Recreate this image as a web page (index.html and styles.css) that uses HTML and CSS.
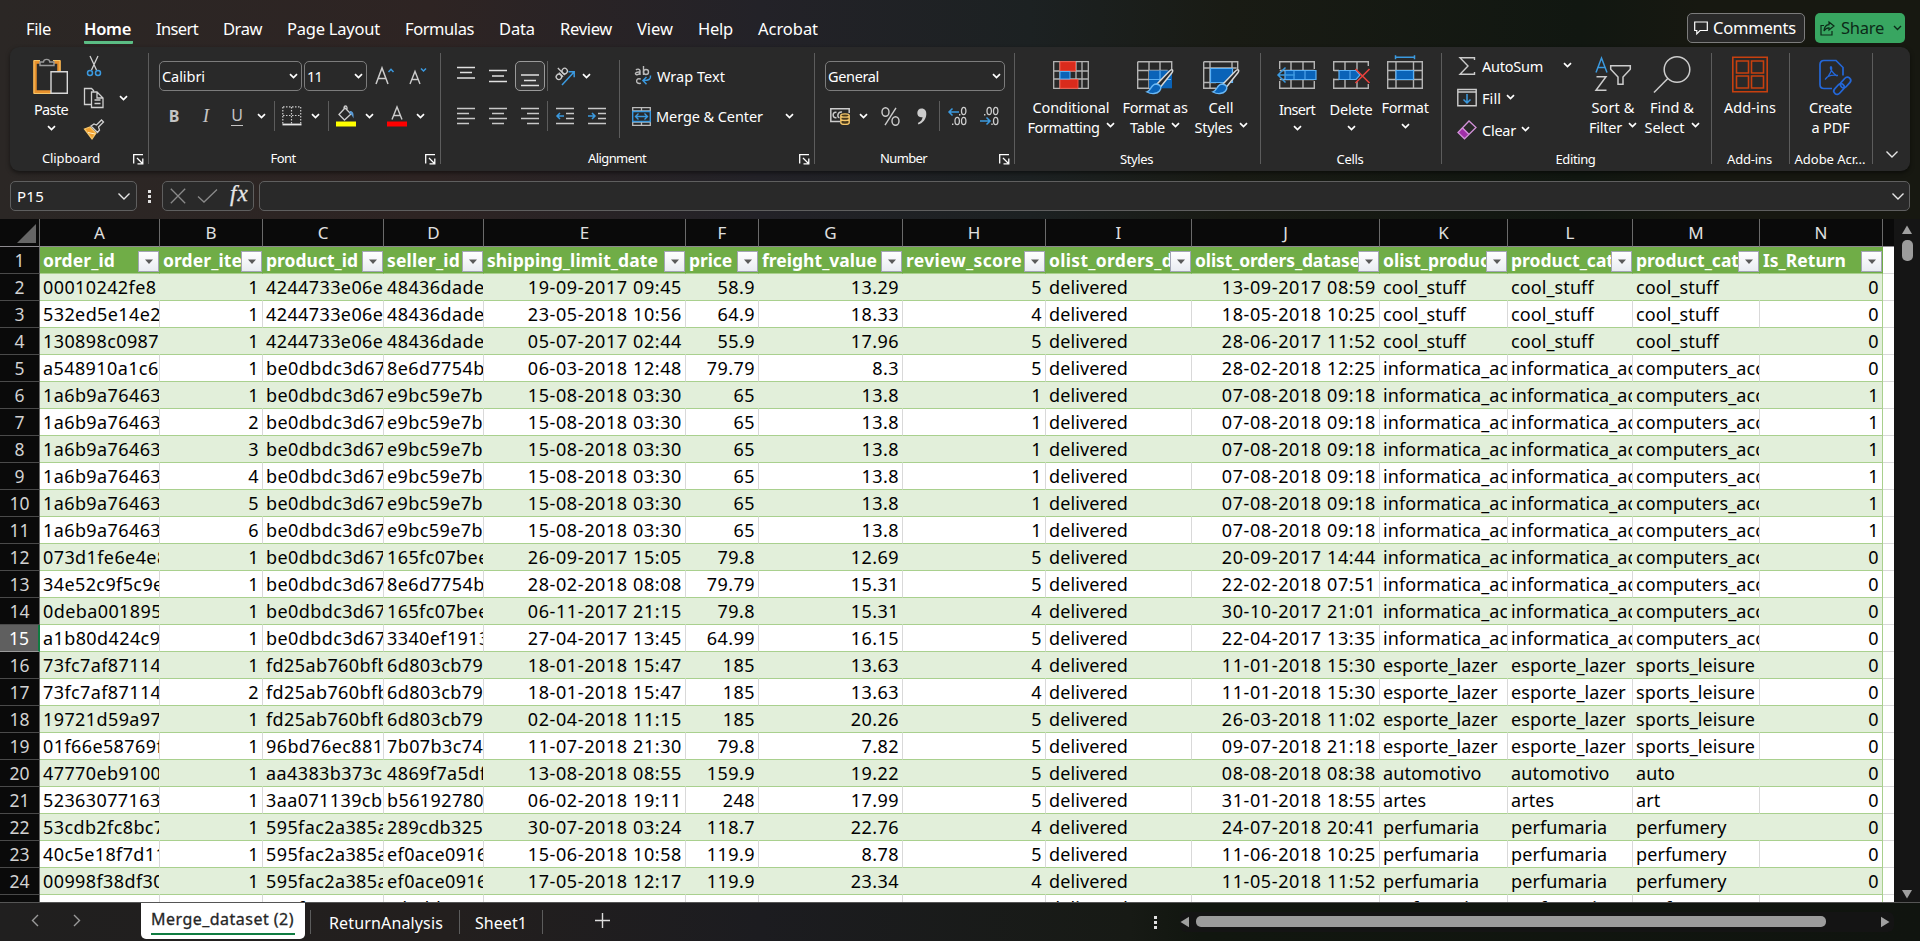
FILE: index.html
```html
<!DOCTYPE html>
<html lang="en">
<head>
<meta charset="utf-8">
<title>Merge_dataset - Workbook</title>
<link rel="stylesheet" href="styles.css">
</head>
<body>
<svg width="0" height="0" class="defs">
  <symbol id="chev" viewBox="0 0 9 6"><path d="M1 1.2 4.5 4.6 8 1.2" fill="none" stroke="#fff" stroke-width="1.7"/></symbol>
  <symbol id="wide" viewBox="0 0 14 9"><path d="M1.5 1.5 7 7 12.5 1.5" fill="none" stroke="#e6e6e6" stroke-width="1.4"/></symbol>
  <symbol id="launch" viewBox="0 0 11 11"><path d="M.7 9.500V.7H10M4 4l5 5M9.800 4.500v5.300H4.500" fill="none" stroke="#fff" stroke-width="1.3"/></symbol>
</svg>
<div class="app">
<header class="tabs">
  <nav class="tablist">
    <span class="tab file" data-w="25">File</span><span class="tab active" data-w="47">Home</span><span class="tab" data-w="42">Insert</span><span class="tab" data-w="39">Draw</span><span class="tab" data-w="93">Page Layout</span><span class="tab" data-w="69">Formulas</span><span class="tab" data-w="36">Data</span><span class="tab" data-w="52">Review</span><span class="tab" data-w="36">View</span><span class="tab" data-w="35">Help</span><span class="tab" data-w="60">Acrobat</span>
  </nav>
  <div class="actions">
    <div class="comments"><svg width="14" height="14" viewBox="0 0 14 14"><path d="M.7 1h12.600v8.500H6L2.800 12.800V9.500H.7Z" fill="none" stroke="#fff" stroke-width="1.2"/></svg><span data-w="83">Comments</span></div>
    <div class="share"><svg width="15" height="15" viewBox="0 0 15 15"><path d="M4 4.500H1V14h11V10M9 1l5 4-5 4V6.800C6.500 6.800 5 8 4 10c.2-3.800 2-6 5-6.300Z" fill="none" stroke="#0c2a18" stroke-width="1.2"/></svg><span data-w="43">Share</span><svg class="sc" width="9" height="6" viewBox="0 0 9 6"><path d="M1 1 4.500 4.500 8 1" fill="none" stroke="#0c2a18" stroke-width="1.4"/></svg></div>
  </div>
</header>

<section class="ribbon">
  <div class="group g-clip">
    <div class="body">
      <div class="big paste">
        <svg width="36" height="40" viewBox="0 0 36 40"><path d="M7 6H2v30h17M21 6h5v10" fill="none" stroke="#e8912d" stroke-width="3.500"/><path d="M7 4.500H1v33h18M20 4.500h7V15" fill="none" stroke="#f5c76b" stroke-width="1"/><path d="M7 9.500V6h3.500c.3-3.500 6-3.500 6.300 0H21v3.500Z" fill="#292929" stroke="#9a9a9a" stroke-width="1.400"/><path d="M18 15.700h16.300v21.600H18Z" fill="#292929" stroke="#d8d8d8" stroke-width="1.400"/></svg>
        <span data-w="34">Paste</span><svg class="c"><use href="#chev"/></svg>
      </div>
      <div class="mini">
        <svg width="22" height="22" viewBox="0 0 22 22"><path d="M7 1l6.500 14M15 1 8.500 15" stroke="#d0d0d0" stroke-width="1.300"/><g fill="none" stroke="#3b9ae0" stroke-width="1.500"><circle cx="7" cy="18" r="2.500"/><circle cx="15" cy="18" r="2.500"/></g></svg>
        <svg width="22" height="22" viewBox="0 0 22 22"><path d="M8 17.500H1.500v-16H8.500L11 4M8.500 5H14l6 6v9.500H8.500ZM14 5v6h6M11.500 13h6M11.500 16.500h6" fill="none" stroke="#d0d0d0" stroke-width="1.300"/></svg>
        <svg width="22" height="22" viewBox="0 0 22 22"><path d="M1.500 10 7 8l6 6-4 6Z" fill="#f0a030" stroke="#f5c76b" stroke-width="1.300"/><path d="M5 13.500 12 15" stroke="#fff2c8"/><path d="M8 7l3-2 2.500 1 5-5 2 2-5 5 1 3-2 2.500Z" fill="#292929" stroke="#d0d0d0" stroke-width="1.300"/></svg>
      </div>
      <svg class="c copyc"><use href="#chev"/></svg>
    </div>
    <div class="glabel"><span data-w="58">Clipboard</span><svg class="l"><use href="#launch"/></svg></div>
  </div>

  <div class="group g-font">
    <div class="body col">
      <div class="row f1">
        <div class="combo"><span data-w="43">Calibri</span><svg class="c"><use href="#chev"/></svg></div>
        <div class="combo size"><span data-w="15">11</span><svg class="c"><use href="#chev"/></svg></div>
        <svg width="20" height="20" viewBox="0 0 20 20"><path d="M1 18 7 2l6 16M3.300 12.500h7.500" fill="none" stroke="#ccc" stroke-width="1.500"/><path d="M13.500 6 16 3.300 18.500 6" fill="none" stroke="#3b9ae0" stroke-width="1.500"/></svg>
        <svg width="20" height="20" viewBox="0 0 20 20"><path d="M2 18 7 5.500 12 18M4 13.500h6" fill="none" stroke="#ccc" stroke-width="1.400"/><path d="M13 2.500 15.500 5 18 2.500" fill="none" stroke="#3b9ae0" stroke-width="1.500"/></svg>
      </div>
      <div class="row f2">
        <span class="gb">B</span><span class="gi">I</span><span class="gu">U</span><svg class="c"><use href="#chev"/></svg><i class="sep"></i>
        <svg width="20" height="20" viewBox="0 0 20 20"><path d="M1 .8h18M1 9.500h18M.8 1v17M9.500 1v17M18.700 1v17" fill="none" stroke="#ccc" stroke-width="1.200" stroke-dasharray="1.500 1.500"/><path d="M.5 18.500h19" stroke="#e8e8e8" stroke-width="1.800"/></svg>
        <svg class="c"><use href="#chev"/></svg><i class="sep"></i>
        <svg width="20" height="22" viewBox="0 0 20 22"><path d="M3 9.500 9 3l6 6-6.500 6ZM8 5V2.500c.3-2 2.700-2 3 0V6" fill="none" stroke="#ccc" stroke-width="1.300"/><path d="M14 6c3 0 4 2 3.500 7.500-1-2-1.500-4-4-5Z" fill="#5b9bd5"/><path d="M0 16.500h20v5H0Z" fill="#ff0"/></svg>
        <svg class="c"><use href="#chev"/></svg>
        <svg width="20" height="22" viewBox="0 0 20 22"><path d="M5 14.500 10 2l5 12.500M6.800 10.500h6.500" fill="none" stroke="#ccc" stroke-width="1.400"/><path d="M0 16.500h20v5H0Z" fill="red"/></svg>
        <svg class="c"><use href="#chev"/></svg>
      </div>
    </div>
    <div class="glabel"><span data-w="25">Font</span><svg class="l"><use href="#launch"/></svg></div>
  </div>

  <div class="group g-align">
    <div class="body">
      <div class="col">
        <div class="row a1">
          <svg width="18" height="20"><path d="M0 1.500h18M3 6.500h12M0 12h18" stroke="#e0e0e0" stroke-width="1.400"/></svg>
          <svg width="18" height="20"><path d="M0 4.500h18M3 10h12M0 15.500h18" stroke="#e0e0e0" stroke-width="1.400"/></svg>
          <div class="pressed"><svg width="18" height="20"><path d="M0 9h18M3 14.500h12M0 19.500h18" stroke="#e0e0e0" stroke-width="1.400"/></svg></div>
          <i class="sep"></i>
          <svg width="20" height="20" viewBox="0 0 20 20"><g fill="none" stroke="#ccc" stroke-width="1.300" transform="rotate(-45 6 8)"><circle cx="2.500" cy="8.500" r="2.700"/><path d="M5.500 5.500v6M8 1.500v10"/><circle cx="10.700" cy="8.500" r="2.700"/></g><path d="M7 19 19 6M13.500 5.700h5.700v5.500" fill="none" stroke="#3b9ae0" stroke-width="1.500"/></svg>
          <svg class="c"><use href="#chev"/></svg>
        </div>
        <div class="row a2">
          <svg width="18" height="18"><path d="M0 1.500h18M0 6.500h12M0 11.500h18M0 16.500h12" stroke="#c8c8c8" stroke-width="1.600"/></svg>
          <svg width="18" height="18"><path d="M0 1.500h18M3 6.500h12M0 11.500h18M3 16.500h12" stroke="#c8c8c8" stroke-width="1.600"/></svg>
          <svg width="18" height="18"><path d="M0 1.500h18M6 6.500h12M0 11.500h18M6 16.500h12" stroke="#c8c8c8" stroke-width="1.600"/></svg>
          <i class="sep"></i>
          <svg width="18" height="18"><path d="M0 1.500h18M10 6.500h8M10 11.500h8M0 16.500h18" stroke="#c8c8c8" stroke-width="1.600"/><path d="M8 9H1M4 6 1 9l3 3" fill="none" stroke="#3b9ae0" stroke-width="1.500"/></svg>
          <svg width="18" height="18"><path d="M0 1.500h18M10 6.500h8M10 11.500h8M0 16.500h18" stroke="#c8c8c8" stroke-width="1.600"/><path d="M0 9h7M4 6l3 3-3 3" fill="none" stroke="#3b9ae0" stroke-width="1.500"/></svg>
        </div>
      </div>
      <i class="sep tall"></i>
      <div class="col wrapcol">
        <div class="line"><svg width="20" height="20" viewBox="0 0 20 20"><g fill="none" stroke="#bbb" stroke-width="1.400"><path d="M4 4c1-1.200 4-1.200 4 .8V9M8 6C2 5.500 3 9 5 8.700 7 8.500 8 7.500 8 6M11.500 0v9M8.800 13.200C4 10.800 2.500 18.500 8.800 17.300"/><circle cx="14" cy="6" r="2.500"/></g><path d="M18.500 9.500c.5 4-2 5-7 5M14.500 11l-3.500 3.500 3.500 3.800" fill="none" stroke="#3b9ae0" stroke-width="1.500"/></svg><span data-w="68">Wrap Text</span></div>
        <div class="line"><svg width="19" height="19" viewBox="0 0 19 19"><path d="M.7.700h17.600v17.600H.700ZM9.500 1v4M9.500 14v4M.7 4h18M.700 15h18" fill="none" stroke="#bdbdbd" stroke-width="1.300"/><path d="M.7 4.500h17.600v10H.700Z" fill="#292929" stroke="#3b9ae0" stroke-width="1.400"/><path d="M3.500 9.500h12M6.500 6.500l-3 3 3 3M12.500 6.500l3 3-3 3" fill="none" stroke="#3b9ae0" stroke-width="1.400"/></svg><span data-w="107">Merge &amp; Center</span><svg class="c mc"><use href="#chev"/></svg></div>
      </div>
    </div>
    <div class="glabel"><span data-w="58">Alignment</span><svg class="l"><use href="#launch"/></svg></div>
  </div>

  <div class="group g-num">
    <div class="body col">
      <div class="row n1"><div class="combo"><span data-w="51">General</span><svg class="c"><use href="#chev"/></svg></div></div>
      <div class="row n2">
        <svg width="20" height="18" viewBox="0 0 20 18"><path d="M10 14.500H.8V1.800h18.400V6" fill="none" stroke="#ccc" stroke-width="1.500"/><path d="M6.500 5.500C2 4 2 12 6.500 10.500M12 5C7 4 7 11.500 9.500 10.500" fill="none" stroke="#ccc" stroke-width="1.500"/><path d="M10.800 8.500v7c0 2.500 8.400 2.500 8.400 0v-7c0-2.200-8.400-2.200-8.400 0c0 2.200 8.400 2.200 8.400 0M10.800 12c0 2 8.400 2 8.400 0" fill="#4a3a1c" stroke="#f5c76b" stroke-width="1.400"/></svg>
        <svg class="c"><use href="#chev"/></svg>
        <svg width="19" height="19" viewBox="0 0 19 19"><g fill="none" stroke="#ccc" stroke-width="1.400"><ellipse cx="4.500" cy="5" rx="3.500" ry="4.300"/><ellipse cx="14.500" cy="14" rx="3.500" ry="4.300"/><path d="M15 .8 4 18.200"/></g></svg>
        <svg width="10" height="17" viewBox="0 0 10 17"><path d="M4.500.5c3.500 0 5 2.500 4.800 6C9 11 6 15 1.500 16.500L.8 15C4 13.500 5.500 11.500 5.500 9 2 10 .3 7.500.3 5 .3 2.500 2 .5 4.500.500Z" fill="#ccc"/></svg>
        <i class="sep"></i>
        <svg width="19" height="20" viewBox="0 0 19 20"><path d="M11 6H1M4.500 2.500 1 6l3.500 3.500" fill="none" stroke="#3b9ae0" stroke-width="1.500"/><g fill="none" stroke="#ccc" stroke-width="1.300"><ellipse cx="15.700" cy="5" rx="2.200" ry="3.700"/><ellipse cx="9.200" cy="15" rx="2.200" ry="3.700"/><ellipse cx="15.700" cy="15" rx="2.200" ry="3.700"/></g><path d="M11 8h1.400v1.400H11ZM4 17.500h1.400v1.400H4Z" fill="#ccc"/></svg>
        <svg width="19" height="20" viewBox="0 0 19 20"><path d="M0 15h10M6.500 11.500 10 15l-3.500 3.500" fill="none" stroke="#3b9ae0" stroke-width="1.500"/><g fill="none" stroke="#ccc" stroke-width="1.300"><ellipse cx="9.200" cy="5" rx="2.200" ry="3.700"/><ellipse cx="15.700" cy="5" rx="2.200" ry="3.700"/><ellipse cx="15.700" cy="15" rx="2.200" ry="3.700"/></g><path d="M4 8h1.400v1.400H4ZM11.300 17.500h1.400v1.400h-1.400Z" fill="#ccc"/></svg>
      </div>
    </div>
    <div class="glabel"><span data-w="47">Number</span><svg class="l"><use href="#launch"/></svg></div>
  </div>

  <div class="group g-styles">
    <div class="body">
      <div class="big two">
        <svg width="38" height="40" viewBox="0 0 38 40"><path d="M1.700 4.700h34.600v26.600H1.700ZM1.700 14h34.600M1.700 22h34.600M8 4.700v26.600M30 4.700v26.600M24 4.700v26.600" fill="none" stroke="#b4b4b4" stroke-width="1.300"/><path d="M8 4.700h15.500V14H8ZM8 22.500h18v8.800H8Z" fill="#d92b1c" stroke="#f05545"/><path d="M8 14.500h10v7.500H8Z" fill="#0a63b8" stroke="#5ab0f5"/></svg>
        <span data-w="77">Conditional</span><div class="l2"><span data-w="72">Formatting</span><svg class="c"><use href="#chev"/></svg></div>
      </div>
      <div class="big two">
        <svg width="38" height="40" viewBox="0 0 38 40"><path d="M1.700 4.700h34V12M1.700 4.700v26.600H14M1.700 13.500h30M1.700 22.500h16M13 4.700v26.600M24 4.700v9" fill="none" stroke="#b4b4b4" stroke-width="1.400"/><path d="M13 13.500h23v17.800H13Z" fill="#0a63b8"/><path d="M13 22.500h22M24 13.500v17" stroke="#5ab0f5" stroke-width="1.200"/><path d="M21 27 33 14.500c3-3 5-1.500 2.700 1.500L24.500 30Z" fill="#292929" stroke="#d8d8d8" stroke-width="1.500"/><path d="M11 35c4-1 4-8 9-8 5 .5 6 4 3.500 7s-8 3.500-12.500 1Z" fill="#0a63b8" stroke="#6ab8f5" stroke-width="1.400"/></svg>
        <span data-w="65">Format as</span><div class="l2"><span data-w="35">Table</span><svg class="c"><use href="#chev"/></svg></div>
      </div>
      <div class="big two">
        <svg width="38" height="40" viewBox="0 0 38 40"><path d="M1.700 4.700h34V12M1.700 4.700v26.600H14M1.700 11h33M8 4.700v26.600M30 4.700v9M1.700 25.500H14" fill="none" stroke="#b4b4b4" stroke-width="1.400"/><path d="M8.500 11.500h22v14h-22Z" fill="#0a63b8" stroke="#5ab0f5" stroke-width="1.200"/><path d="M21 27 33 14.500c3-3 5-1.500 2.700 1.500L24.500 30Z" fill="#292929" stroke="#d8d8d8" stroke-width="1.500"/><path d="M11 35c4-1 4-8 9-8 5 .5 6 4 3.500 7s-8 3.500-12.500 1Z" fill="#0a63b8" stroke="#6ab8f5" stroke-width="1.400"/></svg>
        <span data-w="25">Cell</span><div class="l2"><span data-w="38">Styles</span><svg class="c"><use href="#chev"/></svg></div>
      </div>
    </div>
    <div class="glabel low"><span data-w="33">Styles</span></div>
  </div>

  <div class="group g-cells">
    <div class="body">
      <div class="big one">
        <svg width="40" height="40" viewBox="0 0 40 40"><path d="M2.700 12V4.700h34.600V12M2.700 24v7.300h34.600V24M2.700 13.500h34.600M2.700 22.500h34.600M14 4.700v26.600M26 4.700v26.600" fill="none" stroke="#b4b4b4" stroke-width="1.400"/><path d="M8 13.500h31v9H8Z" fill="#0a63b8" stroke="#5ab0f5" stroke-width="1.200"/><path d="M17 13.500v9M28 13.500v9" stroke="#5ab0f5"/><path d="M18 18H1M8.500 10.500 1 18l7.500 7.500" fill="none" stroke="#3b9ae0" stroke-width="1.500"/></svg>
        <span data-w="36">Insert</span><svg class="c"><use href="#chev"/></svg>
      </div>
      <div class="big one">
        <svg width="40" height="40" viewBox="0 0 40 40"><path d="M2.700 14V4.700h34.600V9M2.700 21.500v9.800h34.600V27M2.700 13.500H8M2.700 22.500H8M14 4.700v9M26 4.700v8M14 22.500v9M26 24v7" fill="none" stroke="#b4b4b4" stroke-width="1.400"/><path d="M8 13.500h17l4 4.500-4 4.500H8Z" fill="#0a63b8" stroke="#5ab0f5" stroke-width="1.200"/><path d="M19 13.500v9" stroke="#5ab0f5"/><path d="m24.500 12 14 14M38.500 12l-14 14" stroke="#e8413c" stroke-width="1.600"/></svg>
        <span data-w="43">Delete</span><svg class="c"><use href="#chev"/></svg>
      </div>
      <div class="big one fmt">
        <svg width="40" height="40" viewBox="0 0 40 40"><path d="M2.700 4.700h34.600v26.600H2.700ZM2.700 13.500h34.600M2.700 22.500h34.600M11 4.700v26.600M28.500 4.700v26.600" fill="none" stroke="#b4b4b4" stroke-width="1.400"/><path d="M11 13.500h17.500v9H11Z" fill="#0a63b8" stroke="#5ab0f5" stroke-width="1.200"/><path d="M10.500.300h19M10.500-1.700v4M29.500-1.700v4" stroke="#3b9ae0" stroke-width="1.500"/></svg>
        <span data-w="47">Format</span><svg class="c"><use href="#chev"/></svg>
      </div>
    </div>
    <div class="glabel low"><span data-w="27">Cells</span></div>
  </div>

  <div class="group g-edit">
    <div class="body">
      <div class="editlist">
        <div class="line"><svg width="20" height="20" viewBox="0 0 20 20"><path d="M17.500 4V1.700H3L11 10l-8 8.300h14.500V16" fill="none" stroke="#ccc" stroke-width="1.400"/></svg><span data-w="61">AutoSum</span><svg class="c asc"><use href="#chev"/></svg></div>
        <div class="line"><svg width="20" height="20" viewBox="0 0 20 20"><path d="M.8 1.500h18.400v16.300H.8ZM.8 4h18.400" fill="none" stroke="#ccc" stroke-width="1.400"/><path d="M10 6v9M6.500 11.500 10 15l3.500-3.500" fill="none" stroke="#3b9ae0" stroke-width="1.500"/></svg><span data-w="19">Fill</span><svg class="c"><use href="#chev"/></svg></div>
        <div class="line"><svg width="20" height="20" viewBox="0 0 20 20"><path d="m1 12.500 5-5 6 6-5 5Z" fill="#a02fa8"/><path d="m1 12.500 11-11.500 7 6.500L7.500 18.800ZM5.500 8l6.500 6.500" fill="none" stroke="#d291d8" stroke-width="1.300"/></svg><span data-w="34">Clear</span><svg class="c"><use href="#chev"/></svg></div>
      </div>
      <div class="big two">
        <svg width="38" height="40" viewBox="0 0 38 40"><path d="M2 16.500 7.500 2 13 16.500M3.800 11.500h7.500" fill="none" stroke="#3b9ae0" stroke-width="1.500"/><path d="M2.500 20.700h9.500L2 34.300h10.500M16.700 9.700h19.600v3.500L29 21v7.300h-5V21l-7.300-7.800Z" fill="none" stroke="#ccc" stroke-width="1.500"/></svg>
        <span data-w="43">Sort &amp;</span><div class="l2"><span data-w="33">Filter</span><svg class="c"><use href="#chev"/></svg></div>
      </div>
      <div class="big two">
        <svg width="38" height="40" viewBox="0 0 38 40"><circle cx="24" cy="13.500" r="12.800" fill="none" stroke="#ccc" stroke-width="1.500"/><path d="M14.800 22.500 1 36.500" stroke="#ccc" stroke-width="1.500"/></svg>
        <span data-w="44">Find &amp;</span><div class="l2"><span data-w="40">Select</span><svg class="c"><use href="#chev"/></svg></div>
      </div>
    </div>
    <div class="glabel low"><span data-w="40">Editing</span></div>
  </div>

  <div class="group g-add">
    <div class="body"><div class="big two">
      <svg width="38" height="40" viewBox="0 0 38 40"><path d="M1.800 1.300h34.400v34.400H1.800Z" fill="none" stroke="#c8400f" stroke-width="1.600"/><path d="M5.500 5h12v12h-12ZM20.500 5h12v12h-12ZM5.500 20h12v12h-12ZM20.500 20h12v12h-12Z" fill="none" stroke="#c8400f" stroke-width="1.600"/></svg>
      <span data-w="52">Add-ins</span></div></div>
    <div class="glabel low"><span data-w="45">Add-ins</span></div>
  </div>
  <div class="group g-pdf">
    <div class="body"><div class="big two">
      <svg width="38" height="40" viewBox="0 0 38 40"><g fill="none" stroke="#2467d8" stroke-width="1.700"><path d="M20 32.500H12c-2.500 0-4-1.500-4-4V8.500c0-2.500 1.500-4 4-4h12l7 7v8"/><path d="M19 10.500c-2 1 1 6 6 9.500M19 10.500c2 2-1 9-6 13M13 23.500c2-3 7-5 13-4" stroke-width="1.300"/><rect x="-3.300" y="-6" width="6.600" height="12" rx="3.200" transform="translate(33.500 26.500) rotate(42)"/><rect x="-3.300" y="-6" width="6.600" height="12" rx="3.200" transform="translate(27 33) rotate(42)"/></g></svg>
      <span data-w="43">Create</span><div class="l2"><span data-w="38">a PDF</span></div></div></div>
    <div class="glabel low"><span data-w="71">Adobe Acr...</span></div>
  </div>
  <div class="collapse"><svg width="14" height="9"><use href="#wide"/></svg></div>
</section>

<section class="fbar">
  <div class="namebox"><span data-w="27">P15</span><svg width="14" height="9"><use href="#wide"/></svg></div>
  <div class="dots"><i></i><i></i><i></i></div>
  <div class="fx">
    <svg width="16" height="16"><path d="m.8.800 14.400 14.400M15.200.800.800 15.200" stroke="#8a8a8a" stroke-width="1.300"/></svg>
    <svg width="21" height="16"><path d="M1 8.500 7 14 20 1.500" fill="none" stroke="#8a8a8a" stroke-width="1.300"/></svg>
    <em>fx</em>
  </div>
  <div class="input"><svg width="14" height="9"><use href="#wide"/></svg></div>
</section>

<main class="sheet">
  <div class="grid" id="grid"></div>
  <div class="vscroll"><svg width="12" height="10"><path d="M6 .500 11 9H1Z" fill="#a0a0a0"/></svg><div class="vthumb"></div><svg class="dn" width="12" height="10"><path d="M6 9.500 11 1H1Z" fill="#a0a0a0"/></svg></div>
</main>

<footer class="foot">
  <svg class="prev" width="8" height="13"><path d="M7 1 1.500 6.500 7 12" fill="none" stroke="#9a9a9a" stroke-width="1.400"/></svg>
  <svg class="next" width="8" height="13"><path d="m1 1 5.500 5.500L1 12" fill="none" stroke="#9a9a9a" stroke-width="1.400"/></svg>
  <div class="stab on"><span data-w="143">Merge_dataset (2)</span></div>
  <i class="fs"></i><div class="stab t2"><span data-w="114">ReturnAnalysis</span></div><i class="fs"></i><div class="stab t3"><span data-w="52">Sheet1</span></div><i class="fs"></i>
  <svg class="plus" width="15" height="15"><path d="M7.500 0v15M0 7.500h15" stroke="#ddd" stroke-width="1.400"/></svg>
  <div class="dots fd"><i></i><i></i><i></i></div>
  <div class="hscroll"><svg width="10" height="12"><path d="M.500 6 9 .800v10.400Z" fill="#a0a0a0"/></svg><div class="hthumb"></div><svg class="ra" width="10" height="12"><path d="M9.500 6 1 .800v10.400Z" fill="#a0a0a0"/></svg></div>
</footer>
</div>
<script src="sheet.js"></script>
</body>
</html>
```
FILE: styles.css
```css
* { box-sizing: border-box; }
body { margin: 0; background: #1c1b1a; font-family: "Noto Sans", "Open Sans", sans-serif; color: #fff; overflow: hidden; }
svg { display: block; flex: none; overflow: visible; }
.defs { position: absolute; }
span, em { white-space: pre; }
.app { width: 1920px; height: 941px; display: flex; flex-direction: column;
  background: linear-gradient(90deg, #2b2725 0, #2e2423 430px, #232228 760px, #1c2122 1030px, #191b14 1230px, #111711 1580px, #171811 1700px, #171811 100%); }

.tabs { height: 47px; display: flex; justify-content: space-between; font-size: 16.5px; }
.tablist { display: flex; gap: 25px; padding: 14px 0 0 26px; }
.tab { height: 30px; line-height: 30px; }
.tab.file { margin-right: 8px; }
.tab.active { font-weight: 600; border-bottom: 3px solid #5bbd84; border-radius: 1px; width: 49px; margin-right: -2px; }
.actions { display: flex; gap: 10px; padding: 13px 15px 0 0; line-height: 28px; }
.comments { width: 118px; height: 30px; border: 1px solid #7c7c7c; border-radius: 5px; background: #292929; display: flex; align-items: center; gap: 5px; padding-left: 6px; }
.share { width: 90px; height: 30px; border-radius: 5px; background: #38a661; color: #0c2a18; display: flex; align-items: center; gap: 6px; padding-left: 5px; }
.sc { margin-left: 3px; }

.ribbon { margin: 0 10px; height: 124px; flex: none; width: 1900px; border-radius: 9px; background: #292929; box-shadow: 0 2px 4px rgba(0,0,0,.5); display: flex; padding-top: 6px; font-size: 14.500px; }
.group { height: 111px; border-right: 1px solid #5c5c5c; display: flex; flex-direction: column; flex: none; }
.g-clip { width: 139px; } .g-font { width: 292px; } .g-align { width: 374px; } .g-num { width: 200px; }
.g-styles { width: 246px; } .g-cells { width: 181px; } .g-edit { width: 270px; } .g-add { width: 78px; } .g-pdf { width: 83px; }
.body { height: 95px; display: flex; flex: none; }
.col { display: flex; flex-direction: column; }
.glabel { height: 20px; line-height: 20px; flex: none; font-size: 13px; display: flex; justify-content: center; position: relative; }
.glabel.low { padding: 1px 2px 0 0; }
.l { position: absolute; right: 4px; top: 6px; width: 11px; height: 11px; }
.g-clip .glabel { padding-right: 16px; } .g-font .glabel { padding-right: 23px; } .g-align .glabel { padding-right: 21px; } .g-num .glabel { padding-right: 22px; }
.c { width: 9px; height: 6px; }
.sep { width: 1px; height: 30px; background: #5c5c5c; }

.big { display: flex; flex-direction: column; align-items: center; line-height: 20px; padding-top: 3px; }
.big > svg:first-child { margin-bottom: 1px; }
.l2 { display: flex; align-items: center; gap: 6px; height: 20px; }
.l2 .c { margin-top: -4px; }
.one > span { margin-top: 2px; }
.one .c { margin-top: 6px; }
.one.fmt > span { margin-top: 0; }
.paste { width: 54px; margin-left: 14px; }
.paste > span { margin-top: 2px; }
.paste .c { margin-top: 6px; }
.mini { display: flex; flex-direction: column; gap: 10px; padding: 2px 0 0 5px; }
.copyc { margin: 42px 0 0 14px; }

.row { display: grid; align-items: center; justify-items: center; height: 30px; flex: none; }
.f1 { margin: 8px 0 10px 10px; grid-template-columns: 143px 2px 63px 35px 32px; justify-content: start; }
.f1 .size { grid-column: 3; }
.f2 { margin-left: 9px; grid-template-columns: 32px 32px 30px 18px 8px 27px 20px 6px 30px 16px 40px 6px; }
.combo { width: 100%; height: 30px; border: 1px solid #7c7c7c; border-radius: 5px; display: flex; align-items: center; justify-content: space-between; padding: 0 3px 0 2px; }
.combo span { line-height: 28px; }
.gb, .gi, .gu { color: #c4c4c4; font-size: 16px; line-height: 24px; }
.gb { font-weight: 700; }
.gi { font-family: "Liberation Serif", serif; font-style: italic; font-size: 19px; }
.gu { border-bottom: 1px solid #c4c4c4; line-height: 19px; }
.a1 { margin: 8px 0 10px 9px; grid-template-columns: 32px 32px 32px 2px 34px 8px; }
.a2 { margin-left: 9px; grid-template-columns: 32px 32px 32px 2px 34px 30px; width: 162px; }
.pressed { width: 30px; height: 30px; border: 1px solid #9a9a9a; border-radius: 5px; background: #353535; display: grid; place-items: center; }
.tall { height: 78px; margin: 7px 0 0 7px; }
.wrapcol { margin: 8px 0 0 12px; gap: 10px; }
.line { display: flex; align-items: center; height: 30px; line-height: 30px; gap: 5px; }
.mc { margin-left: 17px; }
.n1 { margin: 8px 0 10px 10px; grid-template-columns: 180px; }
.n2 { margin-left: 11px; grid-template-columns: 28px 18px 37px 26px 8px 28px 36px; }
.g-styles .body { display: grid; grid-template-columns: 84px 84px 48px; padding-left: 14px; }
.g-styles .big > svg:first-child, .g-cells .big > svg:first-child { transform: translateY(1px); }
.g-cells .body { display: grid; grid-template-columns: 54px 54px 54px; padding-left: 9px; }
.g-edit .body { display: grid; grid-template-columns: 127px 58px 60px; padding-left: 15px; }
.editlist { display: flex; flex-direction: column; gap: 2px; margin-top: -2px; }
.editlist .line svg + span + .c { margin-top: -2px; }
.editlist .line .asc { margin-left: 15px; }
.editlist .line { gap: 5px; }
.g-add .body, .g-pdf .body { justify-content: center; }
.g-add .body, .g-pdf .body { padding-right: 1px; }
.collapse { padding: 97px 0 0 12px; }

.fbar { height: 48px; display: flex; padding: 10px 10px 8px; flex: none; }
.namebox, .fx, .input { height: 30px; border: 1px solid #5f5f5f; border-radius: 5px; background: #292929; display: flex; align-items: center; }
.namebox { width: 127px; justify-content: space-between; padding: 0 5px 0 6px; font-size: 15px; line-height: 28px; }
.dots { width: 3px; height: 13px; display: flex; flex-direction: column; justify-content: space-between; margin: 9px 11px 0; }
.dots i { width: 3px; height: 3px; background: #e0e0e0; }
.fx { width: 92px; padding-left: 7px; gap: 11px; }
.fx em { font: italic 23px/26px "Liberation Serif", serif; color: #e6e6e6; margin: -4px 0 0 1px; letter-spacing: 1px; -webkit-text-stroke: .3px #e6e6e6; }
.input { width: 1651px; margin-left: 5px; justify-content: flex-end; padding-right: 4px; }

.sheet { height: 683px; display: flex; flex: none; background: #151515; }
.grid { width: 1894px; height: 683px; overflow: hidden; background: #fff; color: #000; font-size: 18px; }
.gr { display: grid; height: 27px; grid-template-columns: 40px 120px 103px 121px 100px 202px 73px 144px 143px 146px 188px 128px 125px 127px 123px 11px; }
.gr > div { border-bottom: 1px solid #a9d08e; border-right: 1px solid #d9d9d9; line-height: 26px; height: 27px; overflow: hidden; padding: 0 3px; white-space: pre; }
.gr > .t { letter-spacing: .1px; }
.gr > .x { letter-spacing: .4px; }
.gr > .n { text-align: right; letter-spacing: .45px; }
.gr > .d { text-align: right; letter-spacing: .6px; }
.gr.band > div { background: #e2efda; border-right-color: #e2efda; }
.gr > .rh, .gr.band > .rh { background: #0a0a0a; color: #d2d2d2; font-size: 17.500px; text-align: center; border-bottom-color: #4a4a4a; border-right-color: #6a6a6a; }
.gr.sel > .rh { background: #5f5f5f; color: #fff; border-right: 2px solid #107c41; border-bottom-color: #9a9a9a; }
.gr > .end, .gr.band > .end { background: #fff; border-color: #d9d9d9; border-right: 0; }
.gr > div:nth-child(15), .gr.band > div:nth-child(15) { border-right-color: #a9d08e; }
.gr.cols { height: 28px; }
.gr.cols > div { height: 28px; line-height: 27px; background: #0a0a0a; color: #e0e0e0; font-size: 17px; text-align: center; border-color: #6a6a6a; border-bottom-color: #8d8a8f; }
.gr.cols > div.end { border-right: 0; background: #0a0a0a; border-bottom-color: #8d8a8f; }
.gr.cols > .corner { display: flex; justify-content: flex-end; align-items: flex-end; padding: 3px; }
.gr.head > .h { background: #70ad47; border-right-color: #70ad47; color: #fff; font-weight: 700; font-size: 17.500px; position: relative; }
.fbtn { position: absolute; right: 0; top: 4px; width: 21px; height: 21px; border: 1px solid #a3a5b5; background: linear-gradient(#fff, #e9ecf1); display: grid; place-items: center; }
.vscroll { width: 26px; display: flex; flex-direction: column; align-items: center; padding: 6px 0 3px; }
.vthumb { width: 11px; height: 21px; border-radius: 5px; background: #9c9c9c; margin-top: 5px; }
.dn { margin-top: auto; }

.foot { height: 39px; flex: none; border-top: 1px solid #555; display: flex; align-items: center; font-size: 16px; background: linear-gradient(90deg, #201f1f 0, #231f1e 450px, #1c1c20 760px, #171a15 1130px, #11160f 1200px, #10140f 100%); }
.prev { margin-left: 31px; } .next { margin-left: 34px; }
.prev, .next { margin-top: -3px; }
.stab { line-height: 30px; }
.stab.on { margin-left: 60px; width: 164px; height: 36px; margin-top: -3px; background: #fff; color: #262626; border-radius: 0 0 5px 5px; padding: 1px 0 0 10px; }
.stab.on span { display: block; border-bottom: 2px solid #107c41; width: 144px; height: 31px; line-height: 31px; -webkit-text-stroke: .3px #262626; }
.fs { width: 1px; height: 24px; background: #5c5c5c; margin-left: 5px; }
.t2 { margin: 1px 11px 0 18px; width: 114px; } .t3 { margin: 1px 10px 0 15px; width: 52px; }
.plus { margin: -3px 0 0 52px; }
.foot .fd { margin: 0 0 0 544px; }
.hscroll { width: 714px; height: 20px; margin: -1px 0 0 23px; background: #141414; display: flex; align-items: center; border-radius: 6px; }
.hthumb { width: 630px; height: 11px; border-radius: 5px; background: #9c9c9c; margin-left: 6px; }
.ra { margin-left: 54px; }
```
FILE: sheet.js
```js
// Column order: A B C D E F G H I J K L M N
const heads = [['order_id',72],['order_ite',79],['product_id',92],['seller_id',73],['shipping_limit_date',171],['price',43],['freight_value',115],['review_score',116],['olist_orders_d',124],['olist_orders_datase',165],['olist_produc',106],['product_cat',103],['product_cat',103],['Is_Return',83]];
const info = 'informatica_ac|informatica_ac|computers_acc';
const cool = 'cool_stuff|cool_stuff|cool_stuff';
const esp = 'esporte_lazer|esporte_lazer|sports_leisure';
const perf = 'perfumaria|perfumaria|perfumery';
const rows = [
`00010242fe8|1|4244733e06e|48436dade|19-09-2017 09:45|58.9|13.29|5|delivered|13-09-2017 08:59|${cool}|0`,
`532ed5e14e2|1|4244733e06e|48436dade|23-05-2018 10:56|64.9|18.33|4|delivered|18-05-2018 10:25|${cool}|0`,
`130898c0987|1|4244733e06e|48436dade|05-07-2017 02:44|55.9|17.96|5|delivered|28-06-2017 11:52|${cool}|0`,
`a548910a1c6|1|be0dbdc3d67|8e6d7754b|06-03-2018 12:48|79.79|8.3|5|delivered|28-02-2018 12:25|${info}|0`,
`1a6b9a76463|1|be0dbdc3d67|e9bc59e7b|15-08-2018 03:30|65|13.8|1|delivered|07-08-2018 09:18|${info}|1`,
`1a6b9a76463|2|be0dbdc3d67|e9bc59e7b|15-08-2018 03:30|65|13.8|1|delivered|07-08-2018 09:18|${info}|1`,
`1a6b9a76463|3|be0dbdc3d67|e9bc59e7b|15-08-2018 03:30|65|13.8|1|delivered|07-08-2018 09:18|${info}|1`,
`1a6b9a76463|4|be0dbdc3d67|e9bc59e7b|15-08-2018 03:30|65|13.8|1|delivered|07-08-2018 09:18|${info}|1`,
`1a6b9a76463|5|be0dbdc3d67|e9bc59e7b|15-08-2018 03:30|65|13.8|1|delivered|07-08-2018 09:18|${info}|1`,
`1a6b9a76463|6|be0dbdc3d67|e9bc59e7b|15-08-2018 03:30|65|13.8|1|delivered|07-08-2018 09:18|${info}|1`,
`073d1fe6e4e8|1|be0dbdc3d67|165fc07bee|26-09-2017 15:05|79.8|12.69|5|delivered|20-09-2017 14:44|${info}|0`,
`34e52c9f5c9e|1|be0dbdc3d67|8e6d7754b|28-02-2018 08:08|79.79|15.31|5|delivered|22-02-2018 07:51|${info}|0`,
`0deba001895|1|be0dbdc3d67|165fc07bee|06-11-2017 21:15|79.8|15.31|4|delivered|30-10-2017 21:01|${info}|0`,
`a1b80d424c9|1|be0dbdc3d67|3340ef1913|27-04-2017 13:45|64.99|16.15|5|delivered|22-04-2017 13:35|${info}|0`,
`73fc7af87114|1|fd25ab760bfb|6d803cb79|18-01-2018 15:47|185|13.63|4|delivered|11-01-2018 15:30|${esp}|0`,
`73fc7af87114|2|fd25ab760bfb|6d803cb79|18-01-2018 15:47|185|13.63|4|delivered|11-01-2018 15:30|${esp}|0`,
`19721d59a97|1|fd25ab760bfb|6d803cb79|02-04-2018 11:15|185|20.26|5|delivered|26-03-2018 11:02|${esp}|0`,
`01f66e58769f|1|96bd76ec881|7b07b3c74|11-07-2018 21:30|79.8|7.82|5|delivered|09-07-2018 21:18|${esp}|0`,
`47770eb9100|1|aa4383b373c|4869f7a5df|13-08-2018 08:55|159.9|19.22|5|delivered|08-08-2018 08:38|automotivo|automotivo|auto|0`,
`52363077163|1|3aa071139cb|b56192780|06-02-2018 19:11|248|17.99|5|delivered|31-01-2018 18:55|artes|artes|art|0`,
`53cdb2fc8bc7|1|595fac2a385a|289cdb325|30-07-2018 03:24|118.7|22.76|4|delivered|24-07-2018 20:41|${perf}|0`,
`40c5e18f7d11|1|595fac2a385a|ef0ace0916|15-06-2018 10:58|119.9|8.78|5|delivered|11-06-2018 10:25|${perf}|0`,
`00998f38df30|1|595fac2a385a|ef0ace0916|17-05-2018 12:17|119.9|23.34|4|delivered|11-05-2018 11:52|${perf}|0`,
`||595fac2a385a|cd0dd||||` + `|delivered||${perf}|`
];
const cls = ['t x','n','t x','t x','d','n','n','n','t','d','t','t','t','n'];
const arrow = '<svg width="8" height="5"><path d="M0 .500h8L4 5Z" fill="#5a5a5a"/></svg>';
let html = '<div class="gr cols"><div class="corner"><svg width="19" height="19"><path d="M19 0v19H0Z" fill="#666"/></svg></div>' +
  [...'ABCDEFGHIJKLMN'].map(c => `<div>${c}</div>`).join('') + '<div class="end"></div></div>';
html += '<div class="gr head"><div class="rh">1</div>' + heads.map(([t, w]) => `<div class="h"><span data-w="${w}">${t}</span><i class="fbtn">${arrow}</i></div>`).join('') + '<div class="end"></div></div>';
rows.forEach((r, i) => {
  const n = i + 2;
  html += `<div class="gr${i % 2 ? '' : ' band'}${n === 15 ? ' sel' : ''}"><div class="rh">${n}</div>` +
    r.split('|').map((v, k) => `<div class="${cls[k]}">${v}</div>`).join('') + '<div class="end"></div></div>';
});
document.getElementById('grid').innerHTML = html;

// Track each label so that it occupies its nominal width.
document.querySelectorAll('[data-w]').forEach(el => {
  const range = document.createRange();
  range.selectNodeContents(el);
  const natural = range.getBoundingClientRect().width;
  el.style.letterSpacing = ((el.dataset.w - natural) / el.textContent.length).toFixed(3) + 'px';
});
```
